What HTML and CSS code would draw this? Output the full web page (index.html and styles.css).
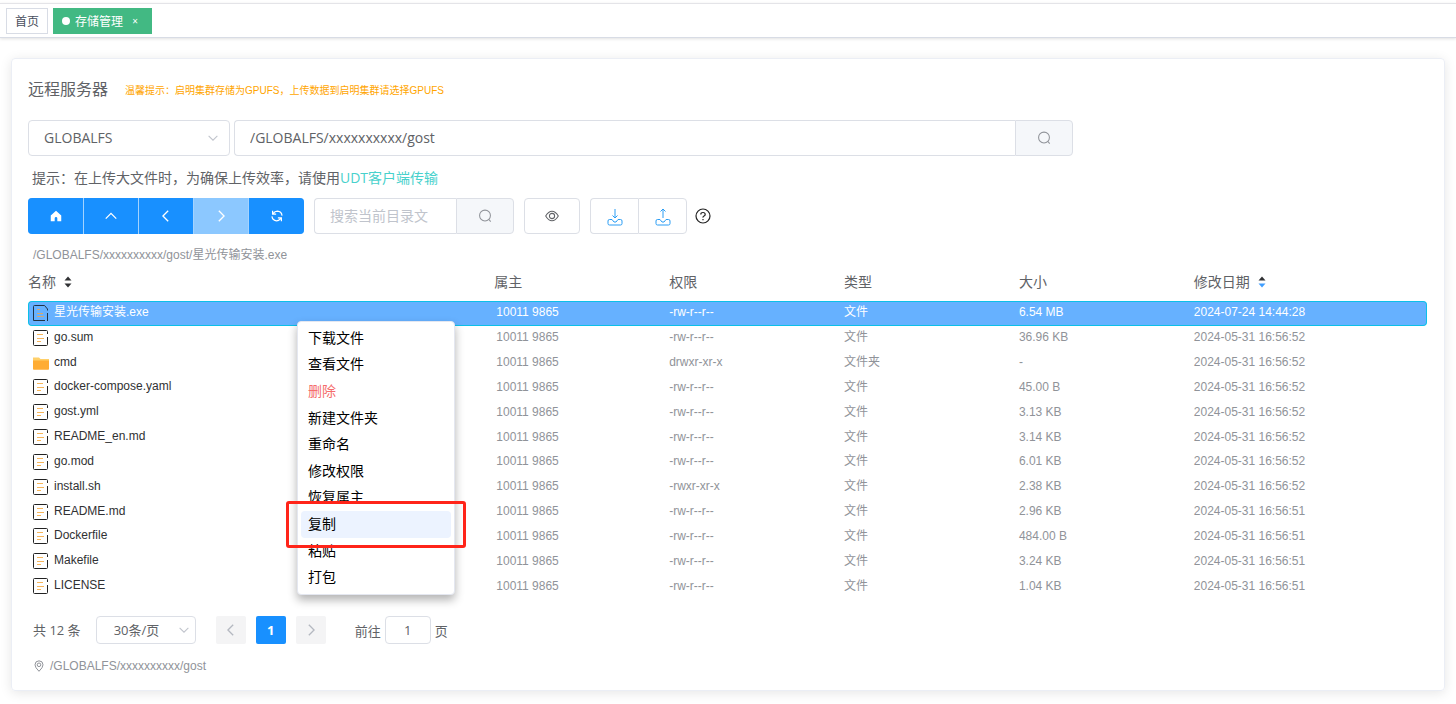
FILE: index.html
```html
<!DOCTYPE html>
<html lang="zh-CN">
<head>
  <meta charset="UTF-8" />
  <meta name="viewport" content="width=device-width, initial-scale=1" />
  <title>存储管理</title>
  <link rel="stylesheet" href="styles.css">
</head>
<body>

  <svg class="sprite" aria-hidden="true">
    <symbol id="i-file" viewBox="0 0 16 18">
      <path d="M14.500 5V2.500Q14.500 1.500 13.500 1.500H1.500Q.5 1.500 .5 2.500V15.500Q.5 16.500 1.500 16.500H13.500Q14.500 16.500 14.500 15.500V8" fill="none" stroke="#222"/>
      <path d="M4 5.500h6M4 9.500h7M4 12.500h4" stroke="#f7b55a"/>
    </symbol>
    <symbol id="i-doc" viewBox="0 0 16 18">
      <path d="M14.500 17V9M14.500 6.500V5L11.500 1.500H1.500Q.5 1.500 .5 2.500V16.500H12" fill="none" stroke="#234"/>
      <path d="M4 5.500h3M4 9.500h6M4 12.500h7" stroke="#d9a86a"/>
    </symbol>
    <symbol id="i-folder" viewBox="0 0 16 18">
      <path d="M0 3.500h6l1.500 1.500H16v4H0z" fill="#ffd06a"/>
      <path d="M0 6.500h16V15q0 .8-.8.8H.8Q0 15.800 0 15z" fill="#ffac33"/>
    </symbol>
    <symbol id="i-down" viewBox="0 0 16 16"><path d="M3 5.500l5 5 5-5" fill="none" stroke="currentColor" stroke-width="1.200"/></symbol>
    <symbol id="i-left" viewBox="0 0 16 16"><path d="M10.500 2l-6 6 6 6" fill="none" stroke="currentColor" stroke-width="1.500"/></symbol>
    <symbol id="i-right" viewBox="0 0 16 16"><path d="M5.500 2l6 6-6 6" fill="none" stroke="currentColor" stroke-width="1.500"/></symbol>
    <symbol id="i-search" viewBox="0 0 16 16"><circle cx="8" cy="7.500" r="6.200" fill="none" stroke="currentColor" stroke-width="1.200"/><path d="M12.500 12l2 2.500" stroke="currentColor" stroke-width="1.200"/></symbol>
    <symbol id="i-sort" viewBox="0 0 8 12"><path d="M4 0.500l3.500 4h-7z" fill="#303133"/><path class="sort-down" d="M4 11.500l3.500-4h-7z"/></symbol>
  </svg>

  <nav class="tags">
    <a class="tag" href="#">首页</a>
    <a class="tag active" href="#"><i class="dot"></i>存储管理<span class="close">×</span></a>
  </nav>

  <main class="card">
    <header class="card-head">
      <h1>远程服务器</h1>
      <p class="warn">温馨提示：启明集群存储为GPUFS，上传数据到启明集群请选择GPUFS</p>
    </header>

    <div class="path-row">
      <div class="select-box fs">
        <select aria-label="文件系统"><option>GLOBALFS</option></select>
        <svg class="arrow"><use href="#i-down"/></svg>
      </div>
      <div class="input-group path">
        <input type="text" aria-label="路径" value="/GLOBALFS/xxxxxxxxxx/gost">
        <button aria-label="前往路径"><svg class="icon"><use href="#i-search"/></svg></button>
      </div>
    </div>

    <p class="tip">提示：在上传大文件时，为确保上传效率，请使用<a href="#">UDT客户端传输</a></p>

    <div class="toolbar">
      <div class="btn-group">
        <button aria-label="主目录"><svg class="icon" viewBox="0 0 16 16"><path d="M8 2L2 7.500V14h4.500v-3.500q0-1.500 1.500-1.500t1.500 1.500V14H14V7.500z" fill="currentColor"/></svg></button>
        <button aria-label="上级目录"><svg class="icon" viewBox="0 0 16 16"><path d="M2 11l6-6 6 6" fill="none" stroke="currentColor" stroke-width="1.500"/></svg></button>
        <button aria-label="后退"><svg class="icon"><use href="#i-left"/></svg></button>
        <button aria-label="前进" disabled><svg class="icon"><use href="#i-right"/></svg></button>
        <button aria-label="刷新"><svg class="icon" viewBox="0 0 16 16" fill="none" stroke="currentColor" stroke-width="1.400"><path d="M3 2v3.800H7M3.300 5.500Q5.500 2.500 8.500 2.500Q13 2.700 13.800 7.500M13 14V10.200H9M12.700 10.500Q10.500 13.500 7.500 13.500Q3 13.300 2.200 8.500"/></svg></button>
      </div>
      <div class="input-group search">
        <input type="text" aria-label="搜索" placeholder="搜索当前目录文">
        <button aria-label="搜索"><svg class="icon"><use href="#i-search"/></svg></button>
      </div>
      <button class="plain" aria-label="显示隐藏文件"><svg class="icon" viewBox="0 0 16 16" fill="none" stroke="currentColor" stroke-width="1.200"><path d="M.8 8Q4 2.500 8 2.500T15.200 8Q12 13.500 8 13.500T.8 8z"/><circle cx="8" cy="8" r="3"/></svg></button>
      <div class="transfer">
        <button aria-label="下载"><svg viewBox="0 0 18 18" fill="none" stroke="currentColor"><path d="M9 1v9M6.500 7.500L9 10l2.500-2.500M6 11.500H3.500Q2 11.500 2 13v2.500Q2 17 3.500 17h11q1.500 0 1.500-1.500V13q0-1.500-1.500-1.500H12L10 14H8z"/></svg></button>
        <button aria-label="上传"><svg viewBox="0 0 18 18" fill="none" stroke="currentColor"><path d="M9 10v-9M6.500 3.500L9 1l2.500 2.500M6 11.500H3.500Q2 11.500 2 13v2.500Q2 17 3.500 17h11q1.500 0 1.500-1.500V13q0-1.500-1.500-1.500H12L10 14H8z"/></svg></button>
      </div>
      <svg class="help" viewBox="0 0 16 16" fill="none" stroke="#222" stroke-width="1.200"><circle cx="8" cy="8" r="7"/><path d="M5.800 6.500Q5.800 4.500 8 4.500T10.200 6.400Q10.200 7.400 9 8T8 9.700M8 11v1.200"/></svg>
    </div>

    <p class="current">/GLOBALFS/xxxxxxxxxx/gost/星光传输安装.exe</p>

    <div class="list">
      <table class="files">
        <thead>
          <tr>
            <th class="c-name">名称<svg class="sort"><use href="#i-sort"/></svg></th>
            <th>属主</th>
            <th>权限</th>
            <th>类型</th>
            <th>大小</th>
            <th class="c-date">修改日期<svg class="sort desc"><use href="#i-sort"/></svg></th>
          </tr>
        </thead>
        <tbody>
          <tr class="selected"><td><svg><use href="#i-doc"/></svg>星光传输安装.exe</td><td>10011 9865</td><td>-rw-r--r--</td><td>文件</td><td>6.54 MB</td><td>2024-07-24 14:44:28</td></tr>
          <tr><td><svg><use href="#i-file"/></svg>go.sum</td><td>10011 9865</td><td>-rw-r--r--</td><td>文件</td><td>36.96 KB</td><td>2024-05-31 16:56:52</td></tr>
          <tr><td><svg><use href="#i-folder"/></svg>cmd</td><td>10011 9865</td><td>drwxr-xr-x</td><td>文件夹</td><td>-</td><td>2024-05-31 16:56:52</td></tr>
          <tr><td><svg><use href="#i-file"/></svg>docker-compose.yaml</td><td>10011 9865</td><td>-rw-r--r--</td><td>文件</td><td>45.00 B</td><td>2024-05-31 16:56:52</td></tr>
          <tr><td><svg><use href="#i-file"/></svg>gost.yml</td><td>10011 9865</td><td>-rw-r--r--</td><td>文件</td><td>3.13 KB</td><td>2024-05-31 16:56:52</td></tr>
          <tr><td><svg><use href="#i-file"/></svg>README_en.md</td><td>10011 9865</td><td>-rw-r--r--</td><td>文件</td><td>3.14 KB</td><td>2024-05-31 16:56:52</td></tr>
          <tr><td><svg><use href="#i-file"/></svg>go.mod</td><td>10011 9865</td><td>-rw-r--r--</td><td>文件</td><td>6.01 KB</td><td>2024-05-31 16:56:52</td></tr>
          <tr><td><svg><use href="#i-file"/></svg>install.sh</td><td>10011 9865</td><td>-rwxr-xr-x</td><td>文件</td><td>2.38 KB</td><td>2024-05-31 16:56:52</td></tr>
          <tr><td><svg><use href="#i-file"/></svg>README.md</td><td>10011 9865</td><td>-rw-r--r--</td><td>文件</td><td>2.96 KB</td><td>2024-05-31 16:56:51</td></tr>
          <tr><td><svg><use href="#i-file"/></svg>Dockerfile</td><td>10011 9865</td><td>-rw-r--r--</td><td>文件</td><td>484.00 B</td><td>2024-05-31 16:56:51</td></tr>
          <tr><td><svg><use href="#i-file"/></svg>Makefile</td><td>10011 9865</td><td>-rw-r--r--</td><td>文件</td><td>3.24 KB</td><td>2024-05-31 16:56:51</td></tr>
          <tr><td><svg><use href="#i-file"/></svg>LICENSE</td><td>10011 9865</td><td>-rw-r--r--</td><td>文件</td><td>1.04 KB</td><td>2024-05-31 16:56:51</td></tr>
        </tbody>
      </table>

      <div class="menu">
        <button>下载文件</button>
        <button>查看文件</button>
        <button class="danger">删除</button>
        <button>新建文件夹</button>
        <button>重命名</button>
        <button>修改权限</button>
        <button>恢复属主</button>
        <button class="current-item">复制</button>
        <button>粘贴</button>
        <button>打包</button>
      </div>
    </div>

    <div class="pagination">
      <span class="total">共 12 条</span>
      <div class="select-box size">
        <select aria-label="每页条数"><option>30条/页</option></select>
        <svg class="arrow"><use href="#i-down"/></svg>
      </div>
      <button class="page" aria-label="上一页" disabled><svg class="icon"><use href="#i-left"/></svg></button>
      <button class="page on">1</button>
      <button class="page" aria-label="下一页" disabled><svg class="icon"><use href="#i-right"/></svg></button>
      <label class="jump">前往<input type="text" value="1">页</label>
    </div>

    <footer class="location">
      <svg viewBox="0 0 12 12" fill="none" stroke="currentColor"><path d="M6 11.300Q2 7.500 2 4.800Q2 1 6 .8Q10 1 10 4.800Q10 7.500 6 11.300z"/><circle cx="6" cy="4.800" r="1.800"/></svg>
      /GLOBALFS/xxxxxxxxxx/gost
    </footer>
  </main>

</body>
</html>
```
FILE: styles.css
```css
* {
  box-sizing: border-box;
}

body {
  margin: 0;
  padding-top: 3px;
  background: #fff;
  color: #606266;
  font-family: "Open Sans", "Noto Sans CJK SC", sans-serif;
  font-size: 14px;
}

h1,
p {
  margin: 0;
  font-weight: 400;
}

button,
input,
select {
  margin: 0;
  padding: 0;
  font: inherit;
  color: inherit;
  border: 1px solid #dcdfe6;
  border-radius: 4px;
  background: #fff;
  outline: none;
}

button {
  display: flex;
  align-items: center;
  justify-content: center;
  cursor: pointer;
}

a {
  text-decoration: none;
}

.sprite {
  position: absolute;
  width: 0;
  height: 0;
}

.icon {
  width: 14px;
  height: 14px;
}

/* 标签栏 */
.tags {
  display: flex;
  gap: 5px;
  height: 35px;
  padding: 4px 6px;
  border-top: 1px solid #e4e4e8;
  border-bottom: 1px solid #d8dce5;
  box-shadow: 0 1px 3px rgba(0, 0, 0, 0.12);
}

.tag {
  display: flex;
  align-items: center;
  height: 26px;
  padding: 0 8px;
  border: 1px solid #d8dce5;
  color: #495060;
  font-size: 12px;
}

.tag.active {
  background: #42b983;
  border-color: #42b983;
  color: #fff;
}

.dot {
  width: 8px;
  height: 8px;
  margin-right: 5px;
  border-radius: 50%;
  background: #fff;
}

.close {
  width: 16px;
  margin-left: 4px;
  font-size: 10px;
  text-align: center;
}

/* 主卡片 */
.card {
  margin: 20px 11px 13px;
  padding: 16px 17px 14px 16px;
  border: 1px solid #ebeef5;
  border-radius: 4px;
  box-shadow: 0 2px 12px rgba(0, 0, 0, 0.1);
}

.card-head {
  display: flex;
  align-items: center;
  height: 26px;
  margin-bottom: 19px;
}

.card-head h1 {
  font-size: 16px;
}

.warn {
  margin-left: 17px;
  padding-top: 3px;
  color: orange;
  font-family: "Liberation Sans", "Noto Sans CJK SC", sans-serif;
  font-size: 10px;
}

.path-row {
  display: flex;
  gap: 4px;
}

.select-box {
  position: relative;
}

.select-box select {
  width: 100%;
  height: 100%;
  padding: 0 0 1px 15px;
  appearance: none;
}

.arrow {
  position: absolute;
  top: 50%;
  right: 10px;
  width: 14px;
  height: 14px;
  margin-top: -7px;
  color: #c0c4cc;
  pointer-events: none;
}

.fs {
  width: 202px;
  height: 36px;
}

.input-group {
  display: flex;
  height: 36px;
}

.input-group input {
  flex: 1;
  min-width: 0;
  padding: 0 15px 2px;
  border-right: 0;
  border-radius: 4px 0 0 4px;
}

.input-group input::placeholder {
  color: #c0c4cc;
}

.input-group button {
  width: 58px;
  background: #f5f7fa;
  border-radius: 0 4px 4px 0;
  color: #909399;
}

.path {
  width: 60%;
}

.tip {
  padding: 1px 0 0 4px;
  line-height: 41px;
}

.tip a {
  color: #48d1cc;
}

/* 工具栏 */
.toolbar {
  display: flex;
  align-items: center;
  gap: 10px;
}

.btn-group {
  display: flex;
  gap: 1px;
  border-radius: 4px;
  overflow: hidden;
  background: #a3d3ff;
}

.btn-group button {
  flex: none;
  width: 54px;
  height: 36px;
  border: 0;
  border-radius: 0;
  background: #1890ff;
  color: #fff;
}

.btn-group button:first-child,
.btn-group button:last-child {
  width: 55px;
}

.btn-group button:disabled {
  background: #8cc8ff;
}

.search {
  width: 200px;
}

.plain {
  width: 56px;
  height: 36px;
}

.transfer {
  display: flex;
}

.transfer button {
  width: 48px;
  height: 36px;
  padding-top: 1px;
  color: #2a9df4;
}

.transfer button:first-child {
  border-right: 0;
  border-radius: 4px 0 0 4px;
}

.transfer button:last-child {
  width: 49px;
  border-radius: 0 4px 4px 0;
}

.transfer svg {
  width: 18px;
  height: 18px;
}

.help {
  width: 16px;
  height: 16px;
  margin-left: -2px;
}

.current,
.files td,
.location {
  font-family: "Liberation Sans", "Noto Sans CJK SC", sans-serif;
  font-size: 12px;
  color: #909399;
}

.current {
  margin-top: 11px;
  padding-left: 5px;
  line-height: 20px;
}

/* 文件列表 */
.list {
  position: relative;
}

.files {
  width: 100%;
  height: 334px;
  border-spacing: 0;
  table-layout: fixed;
}

.files th {
  width: 12.5%;
  height: 36px;
  padding: 0 0 4px;
  font-weight: 400;
  text-align: left;
}

.files .c-name {
  width: 33.33%;
}

.files .c-date {
  width: 16.67%;
}

.sort {
  width: 8px;
  height: 12px;
  margin-left: 8px;
  vertical-align: -1px;
  fill: #303133;
}

.sort.desc {
  fill: #409eff;
}

.files td {
  padding: 0 0 2px;
  border: 1px solid transparent;
  border-width: 1px 0;
  line-height: 16px;
  white-space: nowrap;
}

.files td:first-child {
  padding: 0 0 1px 4px;
  border-left-width: 1px;
  color: #303133;
}

.files td:nth-child(2) {
  padding-left: 2px;
}

.files td:last-child {
  border-right-width: 1px;
}

.files td svg {
  width: 16px;
  height: 18px;
  margin: 0 5px 0 0;
  vertical-align: middle;
}

.files .selected td {
  background: #66b1ff;
  border-color: #0cc0e8;
  color: #fff;
}

.selected td:first-child {
  border-radius: 4px 0 0 4px;
}

.selected td:last-child {
  border-radius: 0 4px 4px 0;
}

/* 右键菜单 */
.menu {
  position: absolute;
  top: 56px;
  left: 269px;
  display: flex;
  flex-direction: column;
  width: 158px;
  height: 274px;
  padding: 3px;
  border: 1px solid #e4e7f0;
  border-radius: 4px;
  background: #fff;
  box-shadow: 0 5px 10px rgba(0, 0, 0, 0.3);
}

.menu button {
  flex: 1;
  justify-content: flex-start;
  padding: 0 0 3px 7px;
  border: 0;
  background: none;
  color: #000;
}

.menu .danger {
  color: #f56c6c;
}

.menu .current-item {
  position: relative;
  background: #ecf3ff;
}

.current-item::after {
  content: "";
  position: absolute;
  inset: -10px -15px;
  border: 3px solid #ff2419;
  border-radius: 3px;
}

/* 分页 */
.pagination {
  display: flex;
  align-items: center;
  gap: 10px;
  margin-top: 17px;
  padding-left: 5px;
  font-size: 13px;
}

.total {
  margin-right: 5px;
  padding-bottom: 2px;
}

.size {
  width: 100px;
  height: 28px;
  margin-right: 10px;
}

.size select {
  padding-left: 17px;
}

.size .arrow {
  right: 5px;
}

.page {
  width: 30px;
  height: 28px;
  border: 0;
  border-radius: 2px;
  background: #f4f4f5;
}

.page:disabled {
  color: #b4b8c0;
}

.page.on {
  background: #1890ff;
  color: #fff;
  font-weight: 700;
}

.jump {
  display: flex;
  align-items: center;
  gap: 4px;
  margin-left: 19px;
}

.jump input {
  width: 46px;
  height: 28px;
  text-align: center;
}

.location {
  display: flex;
  align-items: center;
  gap: 5px;
  height: 20px;
  margin-top: 12px;
  padding-left: 5px;
}

.location svg {
  width: 12px;
  height: 12px;
}
```
